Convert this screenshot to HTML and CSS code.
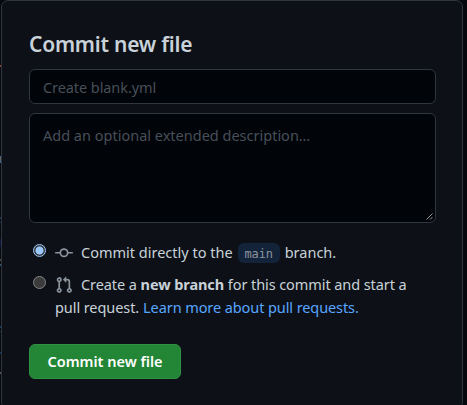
FILE: index.html
```html
<!DOCTYPE html>
<html lang="en">
<head>
<meta charset="utf-8">
<title>Commit new file</title>
<link rel="stylesheet" href="styles.css">
</head>
<body>
<form class="panel">
  <h3 class="title">Commit new file</h3>
  <input class="field summary" type="text" placeholder="Create blank.yml">
  <div class="description">
    <textarea class="field" placeholder="Add an optional extended description…"></textarea>
    <svg class="grip" viewBox="0 0 8 8"><path d="M.5 7.5l7-7M4.5 7.5l3-3"/></svg>
  </div>
  <label class="option direct">
    <input class="radio" type="radio" name="target" checked>
    <span class="copy"><svg class="icon" viewBox="0 0 16 16"><path d="M11.93 8.5a4.002 4.002 0 0 1-7.86 0H.75a.75.75 0 0 1 0-1.5h3.32a4.002 4.002 0 0 1 7.86 0h3.32a.75.75 0 0 1 0 1.5Zm-1.43-.75a2.5 2.5 0 1 0-5 0 2.5 2.5 0 0 0 5 0Z"/></svg><span>Commit directly to the</span><code class="branch">main</code><span>branch.</span></span>
  </label>
  <label class="option">
    <input class="radio" type="radio" name="target">
    <span class="copy"><svg class="icon" viewBox="0 0 16 16"><path d="M1.5 3.25a2.25 2.25 0 1 1 3 2.122v5.256a2.251 2.251 0 1 1-1.5 0V5.372A2.25 2.25 0 0 1 1.5 3.25Zm5.677-.177L9.573.677A.25.25 0 0 1 10 .854V2.5h1A2.5 2.5 0 0 1 13.5 5v5.628a2.251 2.251 0 1 1-1.5 0V5a1 1 0 0 0-1-1h-1v1.646a.25.25 0 0 1-.427.177L7.177 3.427a.25.25 0 0 1 0-.354ZM3.75 2.5a.75.75 0 1 0 0 1.5.75.75 0 0 0 0-1.5Zm0 9.5a.75.75 0 1 0 0 1.5.75.75 0 0 0 0-1.5Zm8.25.75a.75.75 0 1 0 1.5 0 .75.75 0 0 0-1.5 0Z"/></svg><span class="detail">Create a <b>new branch</b> for this commit and start a</span><br><span class="detail">pull request.</span><a class="link" href="#">Learn more about pull requests.</a></span>
  </label>
  <button class="submit" type="button">Commit new file</button>
</form>
</body>
</html>
```
FILE: styles.css
```css
* { box-sizing: border-box; }

body {
  margin: 0;
  height: 405px;
  overflow: hidden;
  /* the dimmed code editor shows as a sliver left of the panel */
  background:
    linear-gradient(#0000 65px, #8c3c38 65px 67px, #0000 67px 156px, #4a6480 156px 158px, #6b6250 158px 160px, #44658c 160px 163px, #0000 163px 217px, #17375a 217px 219px, #0000 219px 222px, #17304c 222px 223px, #0000 223px 239px, #0d1440 239px 247px, #0000 247px 259px, #4c4a3a 259px 261px, #0000 261px 264px, #35506a 264px 266px, #0000 266px 326px, #17375a 326px 328px, #0000 328px 331px, #17304c 331px 332px, #0000 332px 352px, #12305c 352px 354px, #0000 354px 372px, #5a5560 372px 374px, #0000 374px) 0 0 / 1px 405px no-repeat,
    #05080d;
  color: #c9d1d9;
  font: 14.5px/23px "Noto Sans", sans-serif;
}

.panel {
  width: 462px;
  height: 409px;
  margin-left: 1px;
  padding: 31px 26px 0 27px;
  border: 1px solid #30363d;
  border-radius: 7px;
  background: #0d1117;
}

.title {
  height: 37px;
  margin: 0;
  font-size: 21px;
  font-weight: 600;
  line-height: 24px;
  letter-spacing: -.23px;
  white-space: nowrap;
}

.field {
  display: block;
  width: 407px;
  margin: 0;
  padding: 0 13px;
  border: 1px solid #30363d;
  border-radius: 6px;
  outline: 0;
  background: #010409;
  color: #c9d1d9;
  font: inherit;
  resize: none;
}

.field::placeholder { color: #484f58; opacity: 1; }

.summary { height: 35px; letter-spacing: -.08px; }

.description { position: relative; margin-top: 9px; }

.description .field { height: 110px; padding-top: 10px; overflow: hidden; }

.grip {
  position: absolute;
  right: 3px;
  bottom: 3px;
  width: 7px;
  height: 7px;
  fill: none;
  stroke: #b5b5b5;
  stroke-width: 1;
}

.option {
  display: flex;
  align-items: flex-start;
  margin-left: 4px;
  white-space: nowrap;
}

.direct { height: 32px; margin-top: 18px; }

.copy { display: block; margin-left: 9px; }

.radio {
  appearance: none;
  flex: none;
  width: 13px;
  height: 13px;
  margin: 3px 0 0;
  border: 1px solid #858585;
  border-radius: 50%;
  background: #3b3b3b;
}

.radio:checked {
  border-color: #99c8ff;
  background: radial-gradient(circle, #99c8ff 0 3.8px, #3b3b3b 4.3px);
}

.icon {
  width: 18px;
  height: 18px;
  margin-right: 8px;
  fill: #8b949e;
  vertical-align: -4px;
}

.detail { letter-spacing: -.08px; }

.branch {
  display: inline-block;
  height: 20px;
  margin: 0 5px 0 5px;
  padding: 0 7px;
  border-radius: 6px;
  background: #13233a;
  color: #8b949e;
  font: 12px/22px "DejaVu Sans Mono", monospace;
  letter-spacing: -.2px;
  vertical-align: -4px;
  position: relative;
  top: -4px;
}

.link {
  margin-left: 4px;
  color: #58a6ff;
  letter-spacing: -.09px;
  text-decoration: none;
}

.submit {
  display: block;
  width: 152px;
  height: 35px;
  margin-top: 25px;
  padding: 0;
  border: 1px solid #2f9142;
  border-radius: 6px;
  background: #238636;
  color: #fff;
  font: 600 14.5px/23px "Noto Sans", sans-serif;
}
```
